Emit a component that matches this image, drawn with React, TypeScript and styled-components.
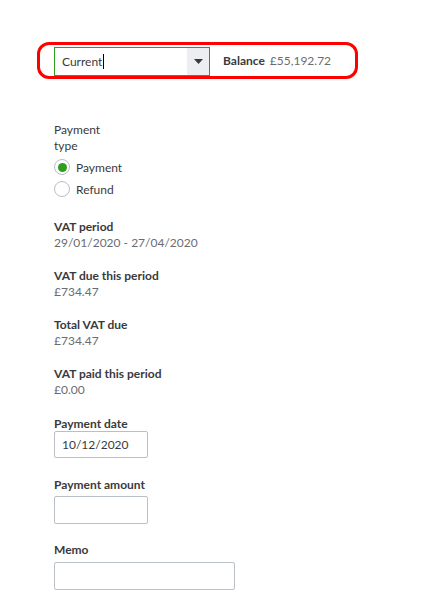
import React from 'react';
import styled, { createGlobalStyle } from 'styled-components';

const GlobalStyle = createGlobalStyle`
  body {
    margin: 0;
    background: #ffffff;
    font-family: Lato, "Open Sans", Arial, sans-serif;
    color: #393a3d;
  }
`;

const Page = styled.div`
  width: 421px;
  height: 596px;
  padding-top: 42px;
  box-sizing: border-box;
`;

const Highlight = styled.div`
  margin-left: 37px;
  width: 321px;
  height: 37px;
  box-sizing: border-box;
  border: 3px solid #ff0000;
  border-radius: 12px;
  display: flex;
  align-items: center;
  padding-left: 14px;
  gap: 13px;
`;

const Select = styled.div`
  width: 156px;
  height: 29px;
  box-sizing: border-box;
  border: 1px solid #2ca01c;
  display: flex;
  align-items: stretch;
  margin-top: 1px;
`;

const SelectText = styled.div`
  flex: 1;
  display: flex;
  align-items: center;
  padding-left: 7px;
  font-size: 12px;
  color: #393a3d;
`;

const Caret = styled.span`
  display: inline-block;
  width: 1px;
  height: 15px;
  background: #000;
  margin-left: 1px;
`;

const SelectButton = styled.div`
  width: 22px;
  background: #eceef1;
  display: flex;
  align-items: center;
  justify-content: center;
`;

const Balance = styled.div`
  font-size: 12px;
  color: #6b6c72;
  b {
    color: #393a3d;
    font-weight: 700;
    margin-right: 5px;
  }
`;

const Form = styled.div`
  padding-left: 54px;
  padding-top: 43px;
  display: flex;
  flex-direction: column;
`;

const TypeLabel = styled.div`
  width: 70px;
  font-size: 12px;
  line-height: 16px;
  color: #393a3d;
  margin-bottom: 2px;
`;

const RadioRow = styled.label`
  display: flex;
  align-items: center;
  gap: 6px;
  height: 22px;
  font-size: 12px;
  color: #393a3d;
`;

const RadioCircle = styled.span<{ $checked?: boolean }>`
  width: 16px;
  height: 16px;
  border-radius: 50%;
  border: 1px solid #babec5;
  box-sizing: border-box;
  display: flex;
  align-items: center;
  justify-content: center;
  background: #fff;
  &::after {
    content: '';
    width: 9px;
    height: 9px;
    border-radius: 50%;
    background: ${p => (p.$checked ? '#2ca01c' : 'transparent')};
  }
`;

const Info = styled.div<{ $top: number }>`
  margin-top: ${p => p.$top}px;
  font-size: 12px;
  line-height: 16px;
`;

const InfoLabel = styled.div`
  font-weight: 700;
  color: #393a3d;
`;

const InfoValue = styled.div`
  color: #6b6c72;
`;

const Field = styled.div<{ $top: number; $gap: number }>`
  margin-top: ${p => p.$top}px;
  display: flex;
  flex-direction: column;
  gap: ${p => p.$gap}px;
`;

const FieldLabel = styled.div`
  font-size: 12px;
  line-height: 14px;
  font-weight: 700;
  color: #393a3d;
`;

const Input = styled.div<{ $w: number; $h: number }>`
  width: ${p => p.$w}px;
  height: ${p => p.$h}px;
  box-sizing: border-box;
  border: 1px solid #babec5;
  border-radius: 2px;
  padding-left: 7px;
  display: flex;
  align-items: center;
  font-size: 12px;
  color: #393a3d;
`;

const infos = [
  { label: 'VAT period', value: '29/01/2020 - 27/04/2020', top: 19 },
  { label: 'VAT due this period', value: '£734.47', top: 17 },
  { label: 'Total VAT due', value: '£734.47', top: 17 },
  { label: 'VAT paid this period', value: '£0.00', top: 17 },
];

const App = () => {
  return (
    <Page>
      <GlobalStyle />
      <Highlight>
        <Select>
          <SelectText>
            Current<Caret />
          </SelectText>
          <SelectButton>
            <svg width="9" height="5" viewBox="0 0 9 5">
              <path d="M0 0h9L4.5 5z" fill="#393a3d" />
            </svg>
          </SelectButton>
        </Select>
        <Balance>
          <b>Balance</b>£55,192.72
        </Balance>
      </Highlight>
      <Form>
        <TypeLabel>Payment type</TypeLabel>
        <RadioRow>
          <RadioCircle $checked />
          Payment
        </RadioRow>
        <RadioRow>
          <RadioCircle />
          Refund
        </RadioRow>
        {infos.map(({ label, value, top }) => (
          <Info key={label} $top={top}>
            <InfoLabel>{label}</InfoLabel>
            <InfoValue>{value}</InfoValue>
          </Info>
        ))}
        <Field $top={19} $gap={0}>
          <FieldLabel>Payment date</FieldLabel>
          <Input $w={94} $h={27}>10/12/2020</Input>
        </Field>
        <Field $top={20} $gap={4}>
          <FieldLabel>Payment amount</FieldLabel>
          <Input $w={94} $h={28} />
        </Field>
        <Field $top={19} $gap={5}>
          <FieldLabel>Memo</FieldLabel>
          <Input $w={181} $h={28} />
        </Field>
      </Form>
    </Page>
  );
};

export default App;
